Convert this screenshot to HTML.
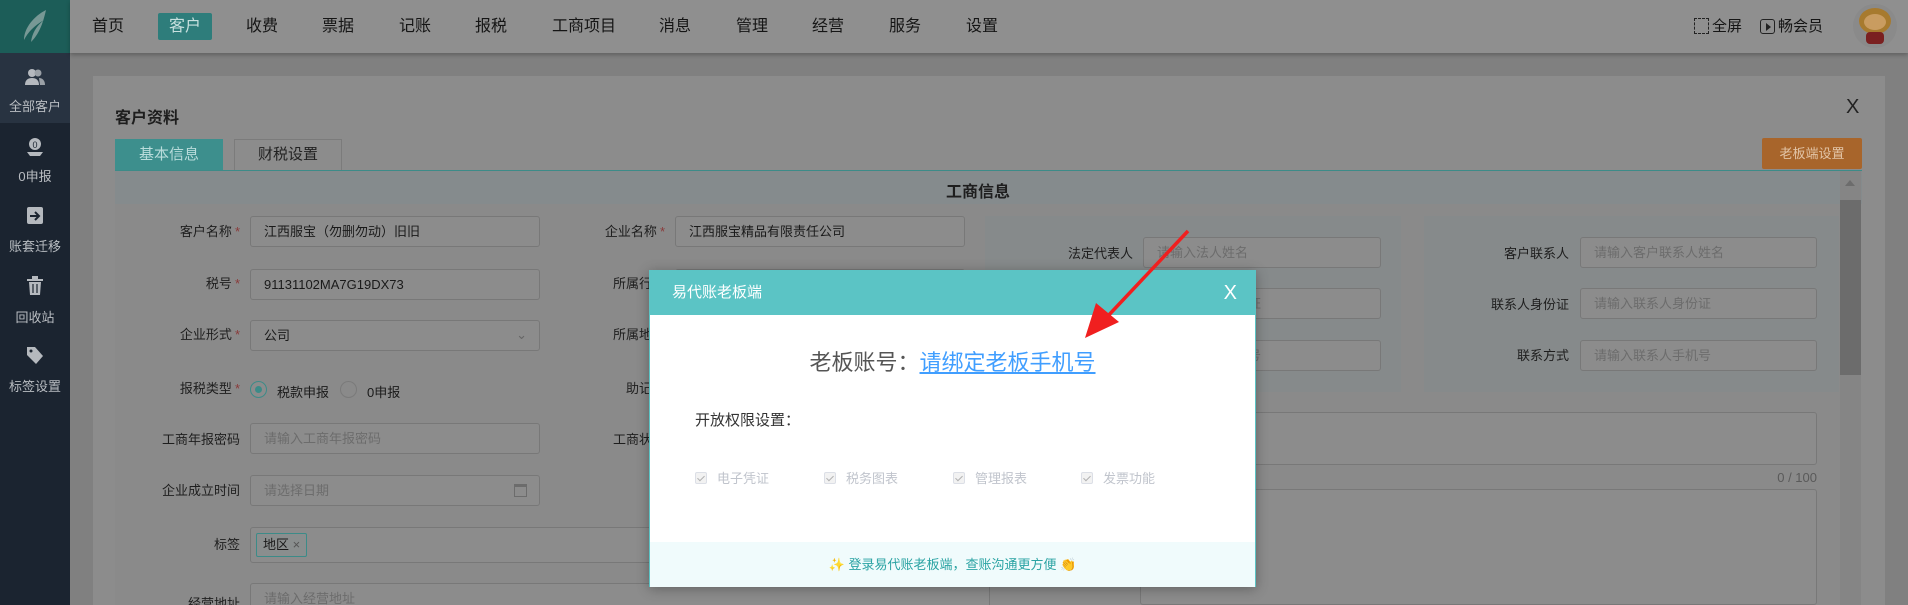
<!DOCTYPE html>
<html style="overflow:hidden"><head><meta charset="utf-8">
<style>
*{box-sizing:border-box;margin:0;padding:0}
body{width:1908px;height:605px;overflow:hidden;background:#808080;font-family:"Liberation Sans","Noto Sans CJK SC",sans-serif;position:relative;color:#1a1a1a}
.abs{position:absolute}
.top{left:70px;top:0;width:1838px;height:53px;background:#8f8f8f;box-shadow:0 2px 4px rgba(0,0,0,.25)}
.nav{position:absolute;top:18px;font-size:16px;color:#151515;line-height:18px}
.side{left:0;top:0;width:70px;height:605px;background:#1b2430}
.logo{left:0;top:0;width:70px;height:53px;background:#1c5d58}
.sact{left:0;top:53px;width:70px;height:70px;background:#283341}
.st{position:absolute;width:70px;text-align:center;font-size:13px;color:#b9bdc2}
.panel{left:93px;top:76px;width:1792px;height:529px;background:#8c8c8c}
.lbl{position:absolute;font-size:13px;color:#1e1e1e;text-align:right;line-height:16px}
.lbl i{color:#8a3a3a;font-style:normal;margin-left:3px}
.inp{position:absolute;height:31px;border:1px solid #787878;border-radius:3px;background:#8c8c8c;font-size:13px;line-height:29px;padding-left:13px;color:#1a1a1a;white-space:nowrap;overflow:hidden}
.ph{color:#6c6c6c}
.box{position:absolute;background:#868a8b}
.cb{display:inline-block;width:12px;height:12px;border:1px solid #dcdfe6;border-radius:2px;background:#f2f2f2;vertical-align:-1px;margin-right:10px;position:relative}
.cb:after{content:"";position:absolute;left:3px;top:1px;width:3px;height:6px;border:solid #b0b0b0;border-width:0 1.5px 1.5px 0;transform:rotate(45deg)}
.ci{position:absolute;top:468px;font-size:13px;color:#c0c4cc}
</style></head><body>
<div class="abs side"></div>
<div class="abs logo"><svg width="70" height="53" viewBox="0 0 70 53"><path d="M46 10 C34 16 24 28 24 40 C28 32 34 26 44 20 C36 26 32 34 31 42 C37 36 42 28 46 10Z" fill="#8fa8a5" opacity=".8"/></svg></div>
<div class="abs sact"></div>
<svg class="abs" style="left:25px;top:68px" width="20" height="18" viewBox="0 0 20 18"><circle cx="7" cy="5" r="4" fill="#b5b9be"/><path d="M0 17c0-5 3-7 7-7s7 2 7 7z" fill="#b5b9be"/><circle cx="13" cy="5" r="3.5" fill="#9aa0a6"/><path d="M14 10c3 0 6 2 6 7h-5z" fill="#9aa0a6"/></svg>
<div class="st" style="top:96px">全部客户</div>
<svg class="abs" style="left:26px;top:137px" width="18" height="20" viewBox="0 0 18 20"><circle cx="9" cy="7" r="6" fill="#b5b9be"/><text x="9" y="11" font-size="9" text-anchor="middle" fill="#1b2430" font-family="Liberation Sans">0</text><path d="M1 15h16l-3 4H4z" fill="#b5b9be"/></svg>
<div class="st" style="top:166px">0申报</div>
<svg class="abs" style="left:26px;top:206px" width="18" height="20" viewBox="0 0 18 20"><rect x="1" y="1" width="16" height="17" rx="2" fill="#b5b9be"/><path d="M4 10h8M9 6l4 4-4 4" stroke="#1b2430" stroke-width="2" fill="none"/></svg>
<div class="st" style="top:236px">账套迁移</div>
<svg class="abs" style="left:27px;top:276px" width="16" height="20" viewBox="0 0 16 20"><rect x="0" y="3" width="16" height="2" fill="#b5b9be"/><rect x="5" y="0" width="6" height="3" fill="#b5b9be"/><path d="M2 6h12l-1 13H3z" fill="#b5b9be"/><path d="M6 8v9M10 8v9" stroke="#1b2430" stroke-width="1.2"/></svg>
<div class="st" style="top:307px">回收站</div>
<svg class="abs" style="left:26px;top:346px" width="18" height="20" viewBox="0 0 18 20"><path d="M1 1h8l8 9-7 8-9-9z" fill="#b5b9be"/><circle cx="5" cy="5" r="1.5" fill="#1b2430"/></svg>
<div class="st" style="top:376px">标签设置</div>

<div class="abs top"></div>
<div class="abs" style="left:158px;top:13px;width:54px;height:27px;background:#2e7d7b;border-radius:2px"></div>
<div class="nav" style="left:92px">首页</div>
<div class="nav" style="left:169px;color:#c8e0df">客户</div>
<div class="nav" style="left:246px">收费</div>
<div class="nav" style="left:322px">票据</div>
<div class="nav" style="left:399px">记账</div>
<div class="nav" style="left:475px">报税</div>
<div class="nav" style="left:552px">工商项目</div>
<div class="nav" style="left:659px">消息</div>
<div class="nav" style="left:736px">管理</div>
<div class="nav" style="left:812px">经营</div>
<div class="nav" style="left:889px">服务</div>
<div class="nav" style="left:966px">设置</div>
<div class="abs" style="left:1694px;top:18px;width:15px;height:16px;border:1.5px dashed #222"></div>
<div class="nav" style="left:1712px;font-size:15px">全屏</div>
<div class="abs" style="left:1760px;top:19px;width:15px;height:15px;border:1.5px solid #222;border-radius:3px"></div>
<div class="abs" style="left:1766px;top:23px;width:0;height:0;border-left:5px solid #222;border-top:4px solid transparent;border-bottom:4px solid transparent"></div>
<div class="nav" style="left:1778px;font-size:15px">畅会员</div>
<div class="abs" style="left:1853px;top:4px;width:44px;height:44px;border-radius:50%;background:#8a8a8a"></div>
<div class="abs" style="left:1859px;top:8px;width:32px;height:26px;border-radius:50%;background:#a77a2e"></div>
<div class="abs" style="left:1864px;top:14px;width:22px;height:16px;border-radius:50%;background:#c99c60"></div>
<div class="abs" style="left:1866px;top:32px;width:18px;height:12px;background:#7a2020;border-radius:4px"></div>

<div class="abs panel"></div>
<div class="abs" style="left:115px;top:104px;font-size:16px;font-weight:bold;color:#1e1e1e">客户资料</div>
<div class="abs" style="left:1846px;top:96px;font-size:20px;color:#222">X</div>
<div class="abs" style="left:115px;top:139px;width:108px;height:31px;background:#3d8f8d;color:#b9dcdb;font-size:15px;text-align:center;line-height:31px">基本信息</div>
<div class="abs" style="left:234px;top:139px;width:108px;height:31px;border:1px solid #7b7b7b;border-bottom:none;color:#222;font-size:15px;text-align:center;line-height:30px">财税设置</div>
<div class="abs" style="left:1762px;top:138px;width:100px;height:31px;background:#a8652b;border-radius:2px;color:#e2c4a6;font-size:13px;text-align:center;line-height:31px">老板端设置</div>
<div class="abs" style="left:115px;top:170px;width:1747px;height:34px;background:#858b8d;border-top:1px solid #3c8b88"></div>
<div class="abs" style="left:946px;top:178px;font-size:16px;font-weight:bold;color:#1e1e1e">工商信息</div>
<div class="abs" style="left:115px;top:204px;width:1725px;height:401px;background:#8a8a8a"></div>
<div class="abs" style="left:1840px;top:171px;width:21px;height:434px;background:#858585"></div>
<div class="abs" style="left:1840px;top:200px;width:21px;height:175px;background:#6c6c6c"></div>
<div class="abs" style="left:1845px;top:180px;width:0;height:0;border-bottom:6px solid #6c6c6c;border-left:5px solid transparent;border-right:5px solid transparent"></div>

<div class="box" style="left:985px;top:216px;width:416px;height:176px"></div>
<div class="box" style="left:1424px;top:216px;width:415px;height:176px"></div>

<div class="lbl" style="left:100px;width:140px;top:224px">客户名称<i>*</i></div>
<div class="inp" style="left:250px;top:216px;width:290px">江西服宝（勿删勿动）旧旧</div>
<div class="lbl" style="left:100px;width:140px;top:276px">税号<i>*</i></div>
<div class="inp" style="left:250px;top:269px;width:290px">91131102MA7G19DX73</div>
<div class="lbl" style="left:100px;width:140px;top:327px">企业形式<i>*</i></div>
<div class="inp" style="left:250px;top:320px;width:290px">公司<span style="position:absolute;right:12px;top:-1px;color:#666">&#8964;</span></div>
<div class="lbl" style="left:100px;width:140px;top:381px">报税类型<i>*</i></div>
<div class="abs" style="left:250px;top:381px;width:17px;height:17px;border-radius:50%;border:1px solid #3c8b88;background:#8c8c8c"></div>
<div class="abs" style="left:255px;top:386px;width:7px;height:7px;border-radius:50%;background:#3c8b88"></div>
<div class="abs" style="left:277px;top:382px;font-size:13px">税款申报</div>
<div class="abs" style="left:340px;top:381px;width:17px;height:17px;border-radius:50%;border:1px solid #7a7a7a"></div>
<div class="abs" style="left:367px;top:382px;font-size:13px">0申报</div>
<div class="lbl" style="left:100px;width:140px;top:432px">工商年报密码</div>
<div class="inp ph" style="left:250px;top:423px;width:290px">请输入工商年报密码</div>
<div class="lbl" style="left:100px;width:140px;top:483px">企业成立时间</div>
<div class="inp ph" style="left:250px;top:475px;width:290px">请选择日期<span style="position:absolute;right:12px;top:8px;width:13px;height:13px;border:1px solid #6c6c6c;border-top-width:3px"></span></div>
<div class="lbl" style="left:100px;width:140px;top:537px">标签</div>
<div class="inp" style="left:250px;top:527px;width:740px;height:36px;padding-left:5px"><span style="display:inline-block;margin-top:5px;height:24px;line-height:22px;border:1px solid #3c8b88;border-radius:2px;padding:0 6px;background:#8a8e8e">地区 <span style="color:#555">×</span></span></div>
<div class="lbl" style="left:100px;width:140px;top:596px">经营地址</div>
<div class="inp ph" style="left:250px;top:583px;width:740px">请输入经营地址</div>

<div class="lbl" style="left:520px;width:145px;top:224px">企业名称<i>*</i></div>
<div class="inp" style="left:675px;top:216px;width:290px">江西服宝精品有限责任公司</div>
<div class="lbl" style="left:520px;width:145px;top:276px">所属行业</div>
<div class="inp" style="left:675px;top:269px;width:290px"></div>
<div class="lbl" style="left:520px;width:145px;top:327px">所属地区</div>
<div class="inp" style="left:675px;top:320px;width:290px"></div>
<div class="lbl" style="left:520px;width:145px;top:381px">助记码</div>
<div class="lbl" style="left:520px;width:145px;top:432px">工商状态</div>

<div class="lbl" style="left:1000px;width:133px;top:246px">法定代表人</div>
<div class="inp ph" style="left:1143px;top:237px;width:238px">请输入法人姓名</div>
<div class="inp ph" style="left:1143px;top:288px;width:238px">请输入法人身份证</div>
<div class="inp ph" style="left:1143px;top:340px;width:238px">请输入法人手机号</div>
<div class="lbl" style="left:1440px;width:129px;top:246px">客户联系人</div>
<div class="inp ph" style="left:1580px;top:237px;width:237px">请输入客户联系人姓名</div>
<div class="lbl" style="left:1440px;width:129px;top:297px">联系人身份证</div>
<div class="inp ph" style="left:1580px;top:288px;width:237px">请输入联系人身份证</div>
<div class="lbl" style="left:1440px;width:129px;top:348px">联系方式</div>
<div class="inp ph" style="left:1580px;top:340px;width:237px">请输入联系人手机号</div>
<div class="inp" style="left:1140px;top:412px;width:677px;height:53px"></div>
<div class="abs" style="left:1760px;top:470px;width:57px;text-align:right;font-size:13px;color:#5a5a5a">0 / 100</div>
<div class="inp" style="left:1140px;top:489px;width:677px;height:116px"></div>

<div class="abs" style="left:649px;top:270px;width:607px;height:317px;background:#fff;box-shadow:0 2px 12px rgba(0,0,0,.3);border:1px solid #5bc4c5">
 <div style="height:44px;background:#5bc4c5;color:#fff;font-size:15px;line-height:44px;padding-left:22px;position:relative">易代账老板端<span style="position:absolute;right:18px;top:0;font-size:20px">X</span></div>
 <div style="position:absolute;top:74px;left:0;width:100%;text-align:center;font-size:22px;color:#555">老板账号：<span style="color:#409eff;text-decoration:underline">请绑定老板手机号</span></div>
 <div style="position:absolute;top:138px;left:45px;font-size:15px;color:#333">开放权限设置：</div>
 <div style="position:absolute;left:0;right:0;top:271px;height:45px;background:#f0fbfc;text-align:center;line-height:45px;font-size:13px;color:#2aa3a3">✨ 登录易代账老板端，查账沟通更方便 👏</div>
</div>
<div class="ci" style="left:695px"><span class="cb"></span>电子凭证</div>
<div class="ci" style="left:824px"><span class="cb"></span>税务图表</div>
<div class="ci" style="left:953px"><span class="cb"></span>管理报表</div>
<div class="ci" style="left:1081px"><span class="cb"></span>发票功能</div>

<svg class="abs" style="left:0;top:0" width="1908" height="605"><path d="M1188 231 L1106 318" stroke="#f01f1f" stroke-width="3.5"/><path d="M1085 338 L1096 303 L1119 322 Z" fill="#f01f1f"/></svg>
</body></html>
